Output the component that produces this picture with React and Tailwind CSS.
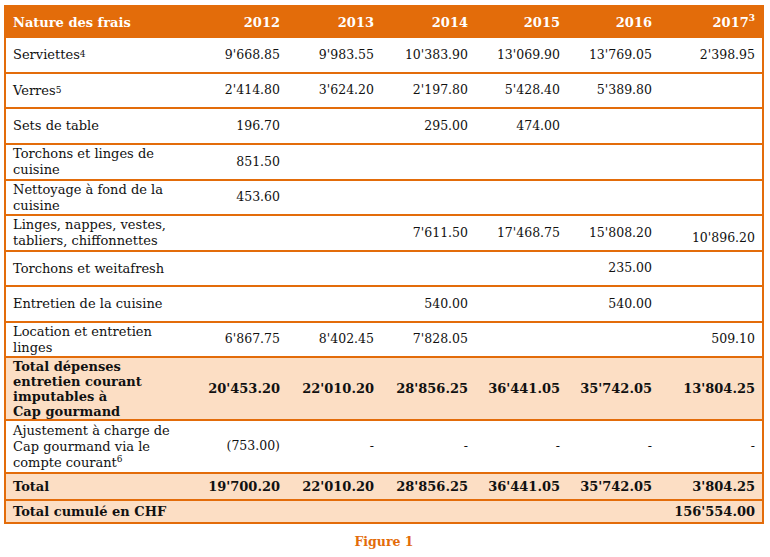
import React from "react";

const ORANGE = "#E36C0A";

const rows = [
  { label: [<>Serviettes<sup className="text-[9px] top-[-2px]">4</sup></>], vals: ["9'668.85", "9'983.55", "10'383.90", "13'069.90", "13'769.05", "2'398.95"], h: "h-[36px]" },
  { label: [<>Verres<sup className="text-[9px] top-[-2px]">5</sup></>], vals: ["2'414.80", "3'624.20", "2'197.80", "5'428.40", "5'389.80", ""], h: "h-[35px]" },
  { label: ["Sets de table"], vals: ["196.70", "", "295.00", "474.00", "", ""], h: "h-[36px]" },
  { label: ["Torchons et linges de", "cuisine"], vals: ["851.50", "", "", "", "", ""], h: "h-[36px]" },
  { label: ["Nettoyage à fond de la", "cuisine"], vals: ["453.60", "", "", "", "", ""], h: "h-[35px]" },
  { label: ["Linges, nappes, vestes,", "tabliers, chiffonnettes"], vals: ["", "", "7'611.50", "17'468.75", "15'808.20", "10'896.20"], h: "h-[36px]", lastBottom: true },
  { label: ["Torchons et weitafresh"], vals: ["", "", "", "", "235.00", ""], h: "h-[35px]" },
  { label: ["Entretien de la cuisine"], vals: ["", "", "540.00", "", "540.00", ""], h: "h-[36px]" },
  { label: ["Location et entretien", "linges"], vals: ["6'867.75", "8'402.45", "7'828.05", "", "", "509.10"], h: "h-[35px]" },
  { label: ["Total dépenses", "entretien courant", "imputables à", "Cap gourmand"], vals: ["20'453.20", "22'010.20", "28'856.25", "36'441.05", "35'742.05", "13'804.25"], h: "h-[63px]", bold: true, tight: true },
  { label: ["Ajustement à charge de", "Cap gourmand via le", <>compte courant<sup className="text-[9px]">6</sup></>], vals: ["(753.00)", "-", "-", "-", "-", "-"], h: "h-[53px]" },
  { label: ["Total"], vals: ["19'700.20", "22'010.20", "28'856.25", "36'441.05", "35'742.05", "3'804.25"], h: "h-[27px]", bold: true },
];

function Row({ r }) {
  return (
    <div
      className={`grid grid-cols-[174px_107px_94px_94px_92px_92px_103px] border-b-2 border-[#E36C0A] ${r.h} ${r.bold ? "bg-[#FCDEC4] font-bold" : "bg-white"}`}
    >
      <div className={`flex flex-col justify-center pl-[7px] text-[13px] ${r.tight ? "leading-[15px]" : "leading-[16px]"}`}>
        {r.label.map((l, i) => (
          <div key={i} className="whitespace-nowrap">{l}</div>
        ))}
      </div>
      {r.vals.map((v, i) => (
        <div
          key={i}
          className={`flex justify-end pr-[7px] whitespace-nowrap ${r.bold ? "text-[13px]" : "text-[12.5px]"} ${
            r.lastBottom && i === 5 ? "items-end pb-[2px]" : "items-center"
          }`}
        >
          {v}
        </div>
      ))}
    </div>
  );
}

export default function App() {
  return (
    <div className="w-[770px] h-[557px] bg-white text-[#111] font-['DejaVu_Serif',serif]">
      <div className="pt-[5px] pl-[4px]">
        <div className="w-[760px] border-2 border-[#E36C0A]">
          <div className="grid grid-cols-[174px_107px_94px_94px_92px_92px_103px] h-[31px] bg-[#E36C0A] text-white font-bold text-[13px]">
            <div className="flex items-center pl-[7px]">Nature des frais</div>
            {["2012", "2013", "2014", "2015", "2016"].map((y) => (
              <div key={y} className="flex items-center justify-end pr-[7px]">{y}</div>
            ))}
            <div className="flex items-center justify-end pr-[7px]">
              2017<sup className="text-[9px]">3</sup>
            </div>
          </div>
          {rows.map((r, i) => (
            <Row key={i} r={r} />
          ))}
          <div className="flex justify-between items-center h-[21px] bg-[#FCDEC4] font-bold text-[13px]">
            <div className="pl-[7px]">Total cumulé en CHF</div>
            <div className="pr-[7px]">156'554.00</div>
          </div>
        </div>
        <div className="w-[760px] text-center mt-[10px] text-[12.5px] font-bold text-[#E36C0A] leading-[16px]">
          Figure 1
        </div>
      </div>
    </div>
  );
}
